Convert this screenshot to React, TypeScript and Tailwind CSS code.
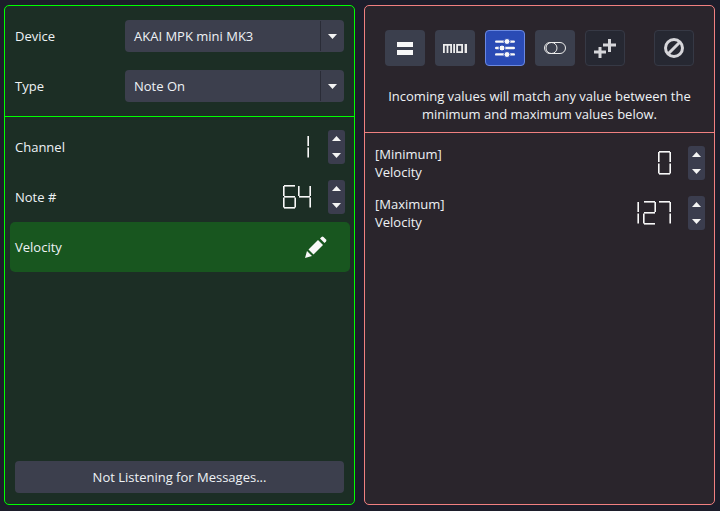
const font = "font-['Open_Sans','Noto_Sans',sans-serif]"

// segments per digit: top, top-left, top-right, middle, bottom-left, bottom-right, bottom
const SEGMENTOS: Record<string, number[]> = {
  "0": [0, 1, 2, 4, 5, 6],
  "1": [2, 5],
  "2": [0, 2, 3, 4, 6],
  "4": [1, 2, 3, 5],
  "6": [0, 1, 3, 4, 5, 6],
  "7": [0, 2, 5],
}

const RECTS = [
  { x: 1, y: 0, width: 11, height: 1.6 },
  { x: 0, y: 1, width: 1.6, height: 10 },
  { x: 11.4, y: 1, width: 1.6, height: 10 },
  { x: 1, y: 11, width: 11, height: 1.6 },
  { x: 0, y: 12.5, width: 1.6, height: 10 },
  { x: 11.4, y: 12.5, width: 1.6, height: 10 },
  { x: 1, y: 22, width: 11, height: 1.6 },
]

function Digito({ d }: { d: string }) {
  return (
    <svg className="shrink-0" width="13" height="24" viewBox="0 0 13 24" fill="#f8f8f8">
      {SEGMENTOS[d].map((i) => (
        <rect key={i} {...RECTS[i]} />
      ))}
    </svg>
  )
}

// LCD read-out; a leading 1 only takes the width of its own right segments
function Lcd({ valor }: { valor: string }) {
  return (
    <div className="flex gap-[2px]" role="img" aria-label={valor}>
      {valor.split("").map((d, i) => (
        <div key={i} className={d === "1" ? "w-[4px] mr-[2px] flex justify-end overflow-hidden" : ""}>
          <Digito d={d} />
        </div>
      ))}
    </div>
  )
}

function Spinner() {
  return (
    <div className="w-[17px] h-[34px] ml-[17px] rounded-[3px] bg-[#3b3d4e] flex flex-col items-center justify-between py-[6px]">
      <svg width="9" height="5" viewBox="0 0 9 5" fill="#f4f4f4"><path d="M4.5 0L9 5H0z" /></svg>
      <svg width="9" height="5" viewBox="0 0 9 5" fill="#f4f4f4"><path d="M0 0h9L4.5 5z" /></svg>
    </div>
  )
}

function Selector({ etiqueta, valor }: { etiqueta: string; valor: string }) {
  return (
    <div className="flex items-center h-8">
      <span className="w-[110px] text-[#eef2f5]">{etiqueta}</span>
      <div className="flex-1 h-8 rounded-[4px] bg-[#3c3f4d] flex items-center">
        <span className="flex-1 pl-[9px] text-[#eef2f5]">{valor}</span>
        <div className="w-[24px] h-[30px] border-l border-[#2a2c37] flex items-center justify-center">
          <svg width="9" height="5" viewBox="0 0 9 5" fill="#f4f4f4"><path d="M0 0h9L4.5 5z" /></svg>
        </div>
      </div>
    </div>
  )
}

function FilaValor({ valor, children }: { valor: string; children: React.ReactNode }) {
  return (
    <div className="flex items-center h-[34px] pl-[10px] pr-[9px]">
      <div className="flex-1 text-[#eef2f5]">{children}</div>
      <Lcd valor={valor} />
      <Spinner />
    </div>
  )
}

function BotonHerramienta({ variante, children }: { variante: "normal" | "activo" | "oscuro"; children: React.ReactNode }) {
  const estilos = {
    normal: "bg-[#3b3f4d]",
    activo: "bg-[#2a4bb5] border border-[#6a88e0]",
    oscuro: "bg-[#262832] border border-[#363945]",
  }
  return (
    <div className={`w-10 h-9 rounded-[4px] flex items-center justify-center ${estilos[variante]}`}>
      {children}
    </div>
  )
}

export default function App() {
  return (
    <div className={`${font} w-[720px] h-[511px] bg-[#1c1d2a] text-[13px] leading-[18px] flex gap-[9px] pl-[4px] pt-[5px] overflow-hidden`}>
      {/* Mensaje MIDI */}
      <div className="w-[351px] h-[500px] border border-[#00ff00] rounded-[5px] bg-[#1c2e25] flex flex-col">
        <div className="h-[111px] shrink-0 border-b border-[#00ff00] pt-[14px] px-[10px] flex flex-col gap-[18px]">
          <Selector etiqueta="Device" valor="AKAI MPK mini MK3" />
          <Selector etiqueta="Type" valor="Note On" />
        </div>
        <div className="flex-1 flex flex-col pt-[13px] gap-4">
          <FilaValor valor="1">Channel</FilaValor>
          <FilaValor valor="64">Note #</FilaValor>
          <div className="h-[50px] -mt-2 ml-[5px] mr-[4px] rounded-[5px] bg-[#18561f] flex items-center pl-[5px] text-[#eef2f5]">
            <span className="flex-1">Velocity</span>
            <svg className="mr-[23px]" width="22" height="22" viewBox="0 0 22 22" fill="#f8f8f8">
              <path d="M0 22l2-7 5 5z" />
              <path d="M3.500 13.500L13 4l5 5-9.500 9.500z" />
              <path d="M15 2.500L16.500 1a1.500 1.500 0 0 1 2 0L21 3.500a1.500 1.500 0 0 1 0 2L19.500 7z" />
            </svg>
          </div>
        </div>
        <div className="mx-[10px] mb-[11px] h-8 rounded-[4px] bg-[#3c3f4d] flex items-center justify-center text-[#eef2f5]">
          Not Listening for Messages...
        </div>
      </div>

      {/* Filtro */}
      <div className="w-[351px] h-[500px] border border-[#f08080] rounded-[5px] bg-[#2a252c] flex flex-col">
        <div className="h-[127px] shrink-0 border-b border-[#f08080]">
          <div className="flex pt-[24px] pl-[20px] gap-[10px]">
            <BotonHerramienta variante="normal">
              <svg width="16" height="13" viewBox="0 0 16 13" fill="#f8f8f8">
                <rect x="0" y="0" width="16" height="5" />
                <rect x="0" y="8" width="16" height="5" />
              </svg>
            </BotonHerramienta>
            <BotonHerramienta variante="normal">
              <svg width="24" height="9" viewBox="0 0 24 9" fill="#ececec">
                <path d="M0 0h9v9H7.200V1.800H5.400V9H3.600V1.800H1.800V9H0z" />
                <rect x="10.200" y="0" width="1.800" height="9" />
                <path d="M13.200 0H20v9h-6.800zM15 1.800v5.400h3.200V1.800z" fillRule="evenodd" />
                <rect x="21.600" y="0" width="2.400" height="9" />
              </svg>
            </BotonHerramienta>
            <BotonHerramienta variante="activo">
              <svg width="20" height="20" viewBox="0 0 20 20" fill="#f8f8f8">
                <rect x="0" y="2.400" width="20" height="2.400" rx="1.200" />
                <circle cx="12" cy="3.500" r="3" stroke="#2a4bb5" strokeWidth="1" />
                <rect x="0" y="8.800" width="20" height="2.400" rx="1.200" />
                <circle cx="7" cy="10" r="3" stroke="#2a4bb5" strokeWidth="1" />
                <rect x="0" y="15.200" width="20" height="2.400" rx="1.200" />
                <circle cx="12" cy="16.500" r="3" stroke="#2a4bb5" strokeWidth="1" />
              </svg>
            </BotonHerramienta>
            <BotonHerramienta variante="normal">
              <svg width="22" height="12" viewBox="0 0 22 12" fill="none" stroke="#ececec" strokeWidth="1">
                <rect x="0.500" y="0.500" width="21" height="11" rx="5.500" />
                <circle cx="7.500" cy="6" r="5.500" />
              </svg>
            </BotonHerramienta>
            <BotonHerramienta variante="oscuro">
              <svg width="22" height="19" viewBox="0 0 22 19" fill="#d6d6da">
                <path d="M4.500 8h3v3.500H12v3H7.500V19h-3v-4.500H0v-3h4.500z" />
                <path d="M14 0h3v4.500h5v3h-5V13h-3V7.500H9v-3h5z" />
              </svg>
            </BotonHerramienta>
            <div className="ml-[19px]">
              <BotonHerramienta variante="oscuro">
                <svg width="20" height="20" viewBox="0 0 20 20" fill="none" stroke="#d6d6da" strokeWidth="3">
                  <circle cx="10" cy="10" r="8.500" />
                  <line x1="4" y1="16" x2="16" y2="4" />
                </svg>
              </BotonHerramienta>
            </div>
          </div>
          <p className="mt-[21px] text-center text-[#eef2f5]">
            Incoming values will match any value between the
            <br />
            minimum and maximum values below.
          </p>
        </div>
        <div className="flex flex-col pt-[13px] gap-4">
          <FilaValor valor="0">
            [Minimum]
            <br />
            Velocity
          </FilaValor>
          <FilaValor valor="127">
            [Maximum]
            <br />
            Velocity
          </FilaValor>
        </div>
      </div>
    </div>
  )
}
